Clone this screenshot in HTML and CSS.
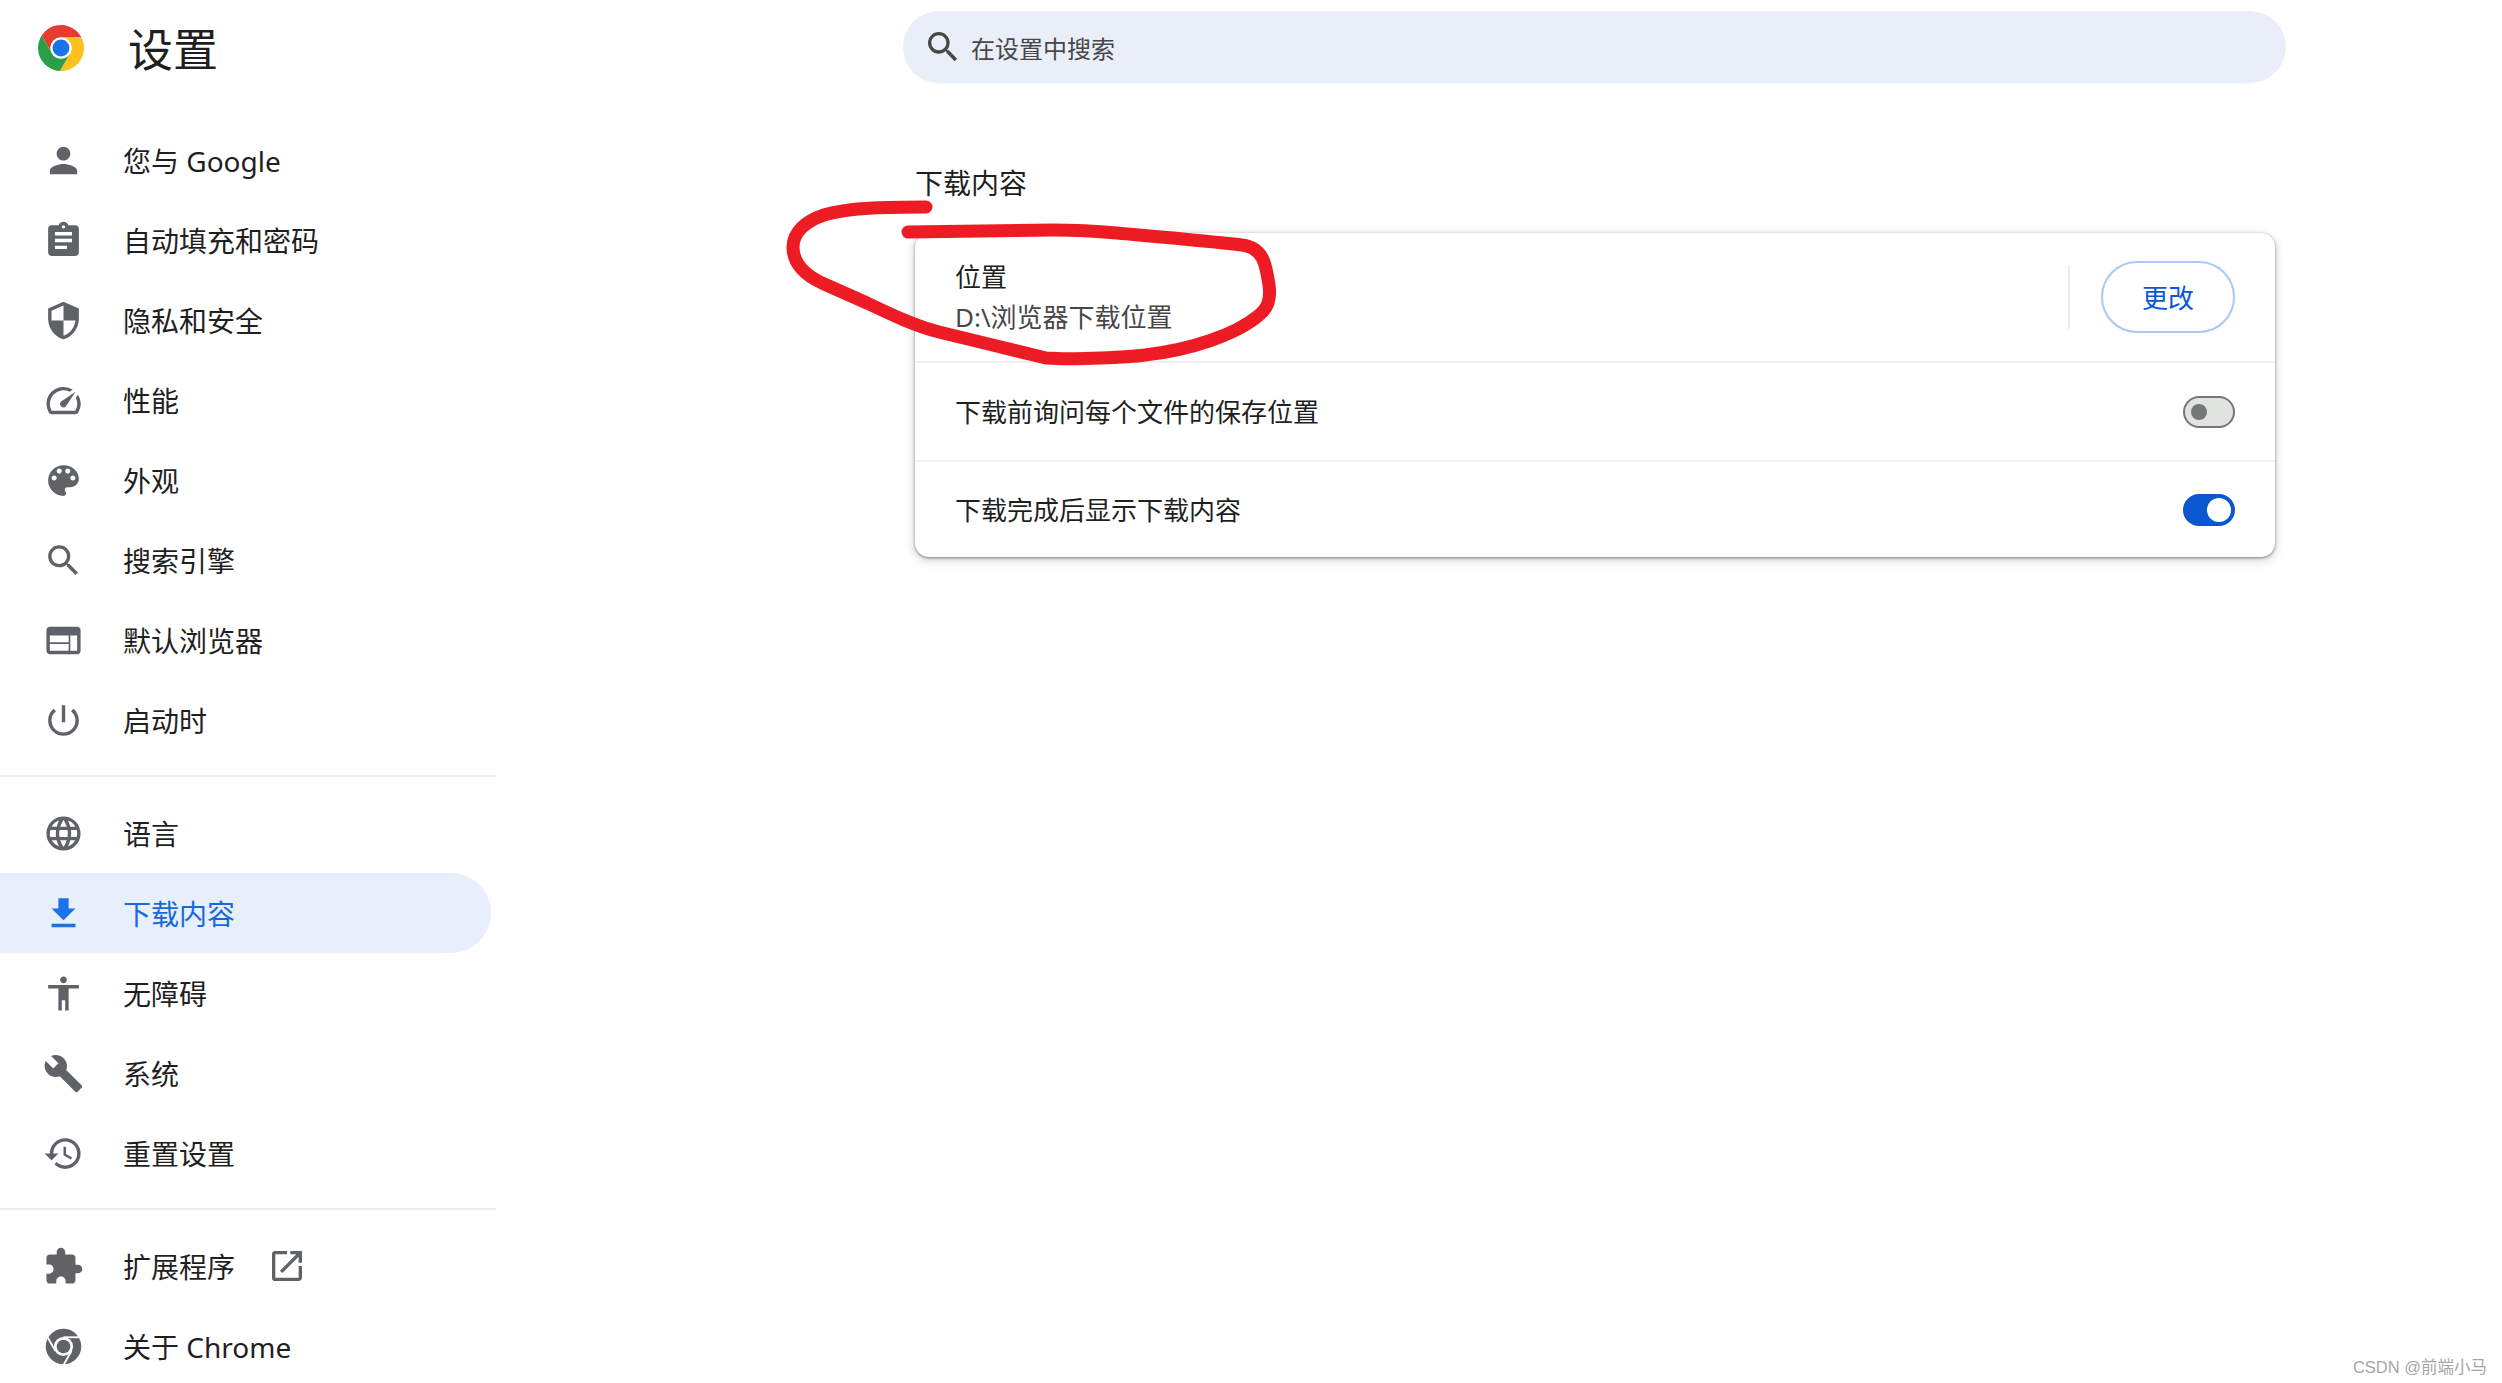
FILE: index.html
```html
<!DOCTYPE html>
<html lang="zh-CN">
<head>
    <meta charset="utf-8">
    <title>设置 - 下载内容</title>
    <link rel="stylesheet" href="styles.css">
</head>
<body>
    <aside class="sidebar">
        <div class="brand">
            <svg class="brand-logo" viewBox="0 0 48 48">
                <path fill="#e43d30" d="M24 13L45.3 13A24 24 0 0 0 3.82 11.05L14.47 29.5A11 11 0 0 1 24 13Z"/>
                <path fill="#ffc21c" d="M33.53 29.5L22.88 47.95A24 24 0 0 0 45.3 13L24 13A11 11 0 0 1 33.53 29.5Z"/>
                <path fill="#2c9e49" d="M14.47 29.5L3.82 11.05A24 24 0 0 0 22.88 47.95L33.53 29.5A11 11 0 0 1 14.47 29.5Z"/>
                <circle cx="24" cy="24" r="11" fill="#fff"/>
                <circle cx="24" cy="24" r="8.8" fill="#1a73e8"/>
            </svg>
            <h1 class="brand-title">设置</h1>
        </div>

        <nav class="nav-group">
            <a class="nav-item">
                <svg class="nav-icon" viewBox="0 0 24 24"><path d="M12 12c2.21 0 4-1.79 4-4s-1.79-4-4-4-4 1.79-4 4 1.79 4 4 4zm0 2c-2.67 0-8 1.34-8 4v2h16v-2c0-2.66-5.33-4-8-4z"/></svg>
                <span>您与 Google</span>
            </a>
            <a class="nav-item">
                <svg class="nav-icon" viewBox="0 0 24 24"><path d="M19 3h-4.18C14.4 1.84 13.3 1 12 1c-1.3 0-2.4.84-2.82 2H5c-1.1 0-2 .9-2 2v14c0 1.1.9 2 2 2h14c1.1 0 2-.9 2-2V5c0-1.1-.9-2-2-2zm-7 0c.55 0 1 .45 1 1s-.45 1-1 1-1-.45-1-1 .45-1 1-1zm2 14H7v-2h7v2zm3-4H7v-2h10v2zm0-4H7V7h10v2z"/></svg>
                <span>自动填充和密码</span>
            </a>
            <a class="nav-item">
                <svg class="nav-icon" viewBox="0 0 24 24"><path d="M12 1L3 5v6c0 5.55 3.84 10.74 9 12 5.16-1.26 9-6.45 9-12V5l-9-4zm0 10.99h7c-.53 4.12-3.28 7.79-7 8.94V12H5V6.3l7-3.11v8.8z"/></svg>
                <span>隐私和安全</span>
            </a>
            <a class="nav-item">
                <svg class="nav-icon" viewBox="0 0 24 24"><path d="M20.38 8.57l-1.23 1.85a8 8 0 0 1-.22 7.58H5.07A8 8 0 0 1 15.58 6.85l1.85-1.23A10 10 0 0 0 3.35 19a2 2 0 0 0 1.72 1h13.85a2 2 0 0 0 1.74-1 10 10 0 0 0-.27-10.44zm-9.79 6.84a2 2 0 0 0 2.83 0l5.66-8.49-8.49 5.66a2 2 0 0 0 0 2.83z"/></svg>
                <span>性能</span>
            </a>
            <a class="nav-item">
                <svg class="nav-icon" viewBox="0 0 24 24"><path d="M12 3a9 9 0 0 0 0 18c.83 0 1.5-.67 1.5-1.5 0-.39-.15-.74-.39-1.01-.23-.26-.38-.61-.38-.99 0-.83.67-1.5 1.5-1.5H16c2.76 0 5-2.24 5-5 0-4.42-4.03-8-9-8zm-5.5 9c-.83 0-1.5-.67-1.5-1.5S5.67 9 6.5 9 8 9.67 8 10.5 7.33 12 6.5 12zm3-4C8.67 8 8 7.33 8 6.5S8.67 5 9.5 5s1.5.67 1.5 1.5S10.33 8 9.5 8zm5 0c-.83 0-1.5-.67-1.5-1.5S13.67 5 14.5 5s1.5.67 1.5 1.5S15.33 8 14.5 8zm3 4c-.83 0-1.5-.67-1.5-1.5S16.67 9 17.5 9s1.5.67 1.5 1.5-.67 1.5-1.5 1.5z"/></svg>
                <span>外观</span>
            </a>
            <a class="nav-item">
                <svg class="nav-icon" viewBox="0 0 24 24"><path d="M15.5 14h-.79l-.28-.27A6.471 6.471 0 0 0 16 9.5 6.5 6.5 0 1 0 9.5 16c1.61 0 3.09-.59 4.23-1.57l.27.28v.79l5 4.99L20.49 19l-4.99-5zm-6 0C7.01 14 5 11.99 5 9.5S7.01 5 9.5 5 14 7.01 14 9.5 11.99 14 9.5 14z"/></svg>
                <span>搜索引擎</span>
            </a>
            <a class="nav-item">
                <svg class="nav-icon" viewBox="0 0 24 24"><path d="M20 4H4c-1.1 0-2 .9-2 2v12c0 1.1.9 2 2 2h16c1.1 0 2-.9 2-2V6c0-1.1-.9-2-2-2zm-5 14H4v-4h11v4zm0-5H4V9h11v4zm5 5h-4V9h4v9z"/></svg>
                <span>默认浏览器</span>
            </a>
            <a class="nav-item">
                <svg class="nav-icon" viewBox="0 0 24 24"><path d="M13 3h-2v10h2V3zm4.83 2.17l-1.42 1.42A6.92 6.92 0 0 1 19 12c0 3.87-3.13 7-7 7A6.995 6.995 0 0 1 7.58 6.58L6.17 5.17A8.932 8.932 0 0 0 3 12a9 9 0 0 0 18 0c0-2.74-1.23-5.18-3.17-6.83z"/></svg>
                <span>启动时</span>
            </a>
        </nav>

        <nav class="nav-group nav-group-split">
            <a class="nav-item">
                <svg class="nav-icon" viewBox="0 0 24 24"><path d="M11.99 2C6.47 2 2 6.48 2 12s4.47 10 9.99 10C17.52 22 22 17.52 22 12S17.52 2 11.99 2zm6.93 6h-2.95a15.65 15.65 0 0 0-1.38-3.56A8.03 8.03 0 0 1 18.92 8zM12 4.04c.83 1.2 1.48 2.53 1.91 3.96h-3.82c.43-1.43 1.08-2.76 1.91-3.96zM4.26 14C4.1 13.36 4 12.69 4 12s.1-1.36.26-2h3.38c-.08.66-.14 1.32-.14 2 0 .68.06 1.34.14 2H4.26zm.82 2h2.95c.32 1.25.78 2.45 1.38 3.56A7.987 7.987 0 0 1 5.08 16zm2.95-8H5.08a7.987 7.987 0 0 1 4.33-3.56A15.65 15.65 0 0 0 8.03 8zM12 19.96c-.83-1.2-1.48-2.53-1.91-3.96h3.82c-.43 1.43-1.08 2.76-1.91 3.96zM14.34 14H9.66c-.09-.66-.16-1.32-.16-2 0-.68.07-1.35.16-2h4.68c.09.65.16 1.32.16 2 0 .68-.07 1.34-.16 2zm.25 5.56c.6-1.11 1.06-2.31 1.38-3.56h2.95a8.03 8.03 0 0 1-4.33 3.56zM16.36 14c.08-.66.14-1.32.14-2 0-.68-.06-1.34-.14-2h3.38c.16.64.26 1.31.26 2s-.1 1.36-.26 2h-3.38z"/></svg>
                <span>语言</span>
            </a>
            <a class="nav-item nav-item-active">
                <svg class="nav-icon" viewBox="0 0 24 24"><path d="M19 9h-4V3H9v6H5l7 7 7-7zM5 18v2h14v-2H5z"/></svg>
                <span>下载内容</span>
            </a>
            <a class="nav-item">
                <svg class="nav-icon" viewBox="0 0 24 24"><path d="M12 2c1.1 0 2 .9 2 2s-.9 2-2 2-2-.9-2-2 .9-2 2-2zm9 7h-6v13h-2v-6h-2v6H9V9H3V7h18v2z"/></svg>
                <span>无障碍</span>
            </a>
            <a class="nav-item">
                <svg class="nav-icon" viewBox="0 0 24 24"><path d="M22.7 19l-9.1-9.1c.9-2.3.4-5-1.5-6.9-2-2-5-2.4-7.4-1.3L9 6 6 9 1.6 4.7C.4 7.1.9 10.1 2.9 12.1c1.9 1.9 4.6 2.4 6.9 1.5l9.1 9.1c.4.4 1 .4 1.4 0l2.3-2.3c.5-.4.5-1.1.1-1.4z"/></svg>
                <span>系统</span>
            </a>
            <a class="nav-item">
                <svg class="nav-icon" viewBox="0 0 24 24"><path d="M13 3a9 9 0 0 0-9 9H1l3.89 3.89.07.14L9 12H6c0-3.87 3.13-7 7-7s7 3.13 7 7-3.13 7-7 7c-1.93 0-3.68-.79-4.94-2.06l-1.42 1.42A8.954 8.954 0 0 0 13 21a9 9 0 0 0 0-18zm-1 5v5l4.28 2.54.72-1.21-3.5-2.08V8H12z"/></svg>
                <span>重置设置</span>
            </a>
        </nav>

        <nav class="nav-group nav-group-split">
            <a class="nav-item">
                <svg class="nav-icon" viewBox="0 0 24 24"><path d="M20.5 11H19V7c0-1.1-.9-2-2-2h-4V3.5a2.5 2.5 0 0 0-5 0V5H4c-1.1 0-1.99.9-1.99 2v3.8H3.5c1.49 0 2.7 1.21 2.7 2.7s-1.21 2.7-2.7 2.7H2V20c0 1.1.9 2 2 2h3.8v-1.5c0-1.49 1.21-2.7 2.7-2.7 1.49 0 2.7 1.21 2.7 2.7V22H17c1.1 0 2-.9 2-2v-4h1.5a2.5 2.5 0 0 0 0-5z"/></svg>
                <span>扩展程序</span>
                <svg class="nav-external" viewBox="0 0 24 24"><path d="M19 19H5V5h7V3H5a2 2 0 0 0-2 2v14a2 2 0 0 0 2 2h14c1.1 0 2-.9 2-2v-7h-2v7zM14 3v2h3.59l-9.83 9.83 1.41 1.41L19 6.41V10h2V3h-7z"/></svg>
            </a>
            <a class="nav-item">
                <svg class="nav-icon" viewBox="0 0 24 24">
                    <circle cx="12" cy="12" r="10.4"/>
                    <circle cx="12" cy="12" r="5.6" fill="#fff"/>
                    <circle cx="12" cy="12" r="4"/>
                    <g class="chrome-cuts">
                        <path d="M12 6.6H23"/>
                        <path d="M12 6.6H23" transform="rotate(120 12 12)"/>
                        <path d="M12 6.6H23" transform="rotate(240 12 12)"/>
                    </g>
                </svg>
                <span>关于 Chrome</span>
            </a>
        </nav>
    </aside>

    <main class="content">
        <div class="search">
            <svg class="search-icon" viewBox="0 0 24 24"><path d="M15.5 14h-.79l-.28-.27A6.471 6.471 0 0 0 16 9.5 6.5 6.5 0 1 0 9.5 16c1.61 0 3.09-.59 4.23-1.57l.27.28v.79l5 4.99L20.49 19l-4.99-5zm-6 0C7.01 14 5 11.99 5 9.5S7.01 5 9.5 5 14 7.01 14 9.5 11.99 14 9.5 14z"/></svg>
            <span>在设置中搜索</span>
        </div>

        <h2 class="section-title">下载内容</h2>

        <section class="card">
            <div class="row row-location">
                <div class="row-text">
                    <div>位置</div>
                    <div class="row-sub">D:\浏览器下载位置</div>
                </div>
                <div class="row-divider"></div>
                <button type="button" class="btn-outline">更改</button>
            </div>
            <div class="row row-ask">
                <div class="row-text">下载前询问每个文件的保存位置</div>
                <div class="toggle"><div class="toggle-knob"></div></div>
            </div>
            <div class="row row-show">
                <div class="row-text">下载完成后显示下载内容</div>
                <div class="toggle toggle-on"><div class="toggle-knob"></div></div>
            </div>
        </section>
    </main>

    <!-- 手绘红圈标注 -->
    <svg class="annotation" viewBox="0 0 2502 1383">
        <path d="M926 207C895 207 850 207 824 215C806 221 793 232 793 247C793 262 803 274 822 283L867 303C890 314 915 326 939 332C975 341 1010 349 1046 358C1075 360 1130 357 1145 355C1190 350 1235 335 1258 316C1268 308 1271 300 1269 285C1266 265 1264 248 1242 245C1200 240 1150 236 1117 233C1095 231 1075 230 1053 230L908 232"/>
    </svg>

    <div class="watermark">CSDN @前端小马</div>
</body>
</html>
```

FILE: styles.css
```css
html, body {
    height: 100%;
    margin: 0;
    overflow: hidden;
}
body {
    position: relative;
    display: flex;
    background: #fff;
    color: #1f1f1f;
    font-family: "Noto Sans", "Noto Sans CJK SC", sans-serif;
    font-size: 28px;
}

/* sidebar */
.sidebar {
    flex: none;
    width: 496px;
}
.brand {
    display: flex;
    align-items: center;
    height: 96px;
    margin-bottom: 24px;
    padding-left: 38px;
}
.brand-logo {
    flex: none;
    width: 46px;
    height: 46px;
}
.brand-title {
    margin: 4px 0 0 44px;
    font-size: 45px;
    font-weight: 400;
    line-height: 60px;
}
.nav-group-split {
    margin-top: 15px;
    padding-top: 16px;
    border-top: 2px solid #ebebeb;
}
.nav-item {
    display: flex;
    align-items: center;
    gap: 39.5px;
    height: 80px;
    margin-right: 5px;
    padding-left: 42.5px;
    border-radius: 0 40px 40px 0;
}
.nav-icon {
    flex: none;
    width: 41px;
    height: 41px;
    fill: #5f6368;
}
.nav-item-active {
    background: #e7eefc;
    color: #1a68d8;
}
.nav-item-active .nav-icon {
    fill: #1a73e8;
}
.nav-external {
    flex: none;
    width: 40px;
    height: 40px;
    margin-left: -8px;
    fill: #5f6368;
}
.chrome-cuts {
    fill: none;
    stroke: #fff;
    stroke-width: 1.1;
}

/* main */
.content {
    flex: none;
    width: 1383px;
    margin-left: 407px;
}
.search {
    display: flex;
    align-items: center;
    gap: 8px;
    height: 72px;
    margin-top: 11px;
    padding-left: 20px;
    border-radius: 36px;
    background: #eaeef8;
    color: #474747;
    font-size: 24px;
}
.search-icon {
    flex: none;
    width: 40px;
    height: 40px;
    fill: #474747;
}
.section-title {
    margin: 80px 0 30px 12px;
    font-size: 28px;
    font-weight: 400;
    line-height: 40px;
}
.card {
    width: 1360px;
    margin-left: 12px;
    border-radius: 14px;
    background: #fff;
    box-shadow: 0 1px 3px rgba(0, 0, 0, .45), 0 3px 10px 2px rgba(0, 0, 0, .13);
    font-size: 26px;
}
.row {
    display: flex;
    align-items: center;
    padding: 0 40px;
}
.row + .row {
    border-top: 2px solid #f0f0f0;
}
.row-location {
    height: 128px;
}
.row-ask {
    height: 97px;
}
.row-show {
    height: 95px;
}
.row-text {
    flex: 1;
    line-height: 40px;
}
.row-sub {
    color: #474747;
}
.row-divider {
    flex: none;
    width: 2px;
    height: 64px;
    margin-right: 31px;
    background: #ededed;
}
.btn-outline {
    flex: none;
    width: 134px;
    height: 72px;
    padding: 0;
    border: 2px solid #a8c7fa;
    border-radius: 36px;
    background: #fff;
    color: #0b57d0;
    font-family: inherit;
    font-size: 26px;
}
.toggle {
    box-sizing: border-box;
    display: flex;
    align-items: center;
    flex: none;
    width: 52px;
    height: 32px;
    padding-left: 6px;
    border: 2px solid #747775;
    border-radius: 16px;
    background: #e1e3e1;
}
.toggle-knob {
    width: 16px;
    height: 16px;
    border-radius: 50%;
    background: #747775;
}
.toggle-on {
    padding-left: 22px;
    border-color: #0b57d0;
    background: #0b57d0;
}
.toggle-on .toggle-knob {
    width: 24px;
    height: 24px;
    background: #fff;
}

/* overlays */
.annotation {
    position: absolute;
    top: 0;
    left: 0;
    width: 2502px;
    height: 1383px;
    fill: none;
    stroke: #ed1c24;
    stroke-width: 13;
    stroke-linecap: round;
    stroke-linejoin: round;
    pointer-events: none;
}
.watermark {
    position: absolute;
    right: 15px;
    bottom: 4px;
    color: #a6a6a6;
    font-family: "Liberation Sans", "Noto Sans CJK SC", sans-serif;
    font-size: 16.5px;
    line-height: 24px;
}
```
